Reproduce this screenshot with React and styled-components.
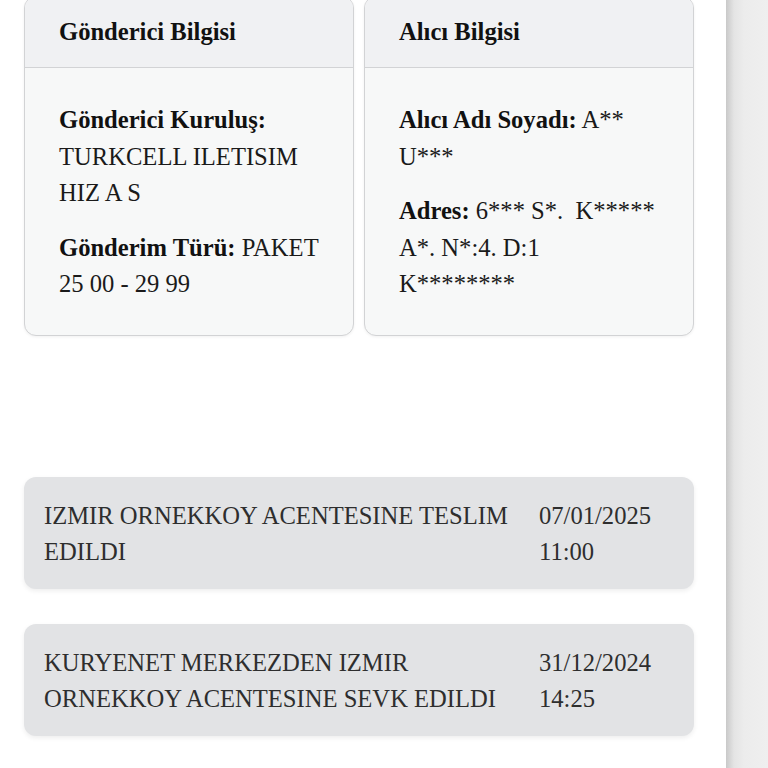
import React from 'react';
import styled, { createGlobalStyle } from 'styled-components';

const serif = `"Liberation Serif", "Tinos", "Times New Roman", "DejaVu Serif", serif`;

const GlobalStyle = createGlobalStyle`
  html, body {
    margin: 0;
    padding: 0;
    background: #fff;
  }
  body {
    font-family: ${serif};
    overflow: hidden;
  }
`;

const Layout = styled.div`
  display: flex;
  height: 768px;
  overflow: hidden;
  font-family: ${serif};
`;

const Main = styled.main`
  flex: 1;
  padding: 0 32px 0 24px;
  margin-top: -4px;
`;

const SidePanel = styled.aside`
  width: 42px;
  flex-shrink: 0;
  background: linear-gradient(to right, #c9c9c9 0px, #e4e4e4 8px, #ececec 18px, #efefef 100%);
`;

const CardGrid = styled.div`
  display: grid;
  grid-template-columns: 1fr 1fr;
  gap: 10px;
`;

const Card = styled.section`
  background: #f7f8f8;
  border: 1.5px solid #d2d3d5;
  border-radius: 12px;
  overflow: hidden;
  box-shadow: 0 1px 3px rgba(0, 0, 0, 0.06);
`;

const CardHeader = styled.header`
  background: #f0f1f3;
  border-bottom: 1.5px solid #d2d3d5;
  padding: 17px 34px 17px;
`;

const CardTitle = styled.h3`
  margin: 0;
  font-family: ${serif};
  font-size: 24.6px;
  line-height: 36px;
  font-weight: bold;
  color: #111;
`;

const CardBody = styled.div`
  display: flex;
  flex-direction: column;
  gap: 18px;
  padding: 34px 34px 32px 34px;
`;

const Field = styled.p`
  margin: 0;
  font-family: ${serif};
  font-size: 24.6px;
  line-height: 36.5px;
  color: #1a1a1a;

  strong {
    color: #111;
  }
`;

const Timeline = styled.div`
  display: flex;
  flex-direction: column;
  gap: 35px;
  margin-top: 141px;
`;

const EventRow = styled.div`
  display: grid;
  grid-template-columns: 1fr 135px;
  column-gap: 18px;
  padding: 21px 20px 19px;
  background: #e2e3e5;
  border-radius: 12px;
  box-shadow: 0 2px 5px rgba(0, 0, 0, 0.07);
  font-family: ${serif};
  font-size: 24.6px;
  line-height: 36px;
  color: #2e2e2e;
`;

const EventText = styled.div``;

const EventDate = styled.div``;

const events = [
  { text: 'IZMIR ORNEKKOY ACENTESINE TESLIM EDILDI', date: '07/01/2025', time: '11:00' },
  { text: 'KURYENET MERKEZDEN IZMIR ORNEKKOY ACENTESINE SEVK EDILDI', date: '31/12/2024', time: '14:25' },
];

const App = () => {
  return (
    <>
      <GlobalStyle />
      <Layout>
        <Main>
          <CardGrid>
            <Card>
              <CardHeader>
                <CardTitle>Gönderici Bilgisi</CardTitle>
              </CardHeader>
              <CardBody>
                <Field>
                  <strong>Gönderici Kuruluş:</strong> TURKCELL ILETISIM HIZ A S
                </Field>
                <Field>
                  <strong>Gönderim Türü:</strong> PAKET 25 00 - 29 99
                </Field>
              </CardBody>
            </Card>
            <Card>
              <CardHeader>
                <CardTitle>Alıcı Bilgisi</CardTitle>
              </CardHeader>
              <CardBody>
                <Field>
                  <strong>Alıcı Adı Soyadı:</strong> A** U***
                </Field>
                <Field>
                  <strong>Adres:</strong> 6*** S*.&nbsp; K***** A*. N*:4. D:1 K********
                </Field>
              </CardBody>
            </Card>
          </CardGrid>
          <Timeline>
            {events.map((e) => (
              <EventRow key={e.date + e.time}>
                <EventText>{e.text}</EventText>
                <EventDate>
                  {e.date}
                  <br />
                  {e.time}
                </EventDate>
              </EventRow>
            ))}
          </Timeline>
        </Main>
        <SidePanel />
      </Layout>
    </>
  );
};

export default App;
